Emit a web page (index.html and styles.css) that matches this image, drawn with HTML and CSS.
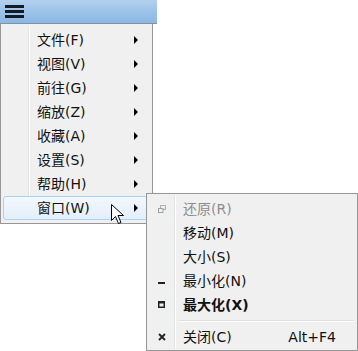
FILE: index.html
```html
<!DOCTYPE html>
<html>
<head>
<meta charset="utf-8">
<link rel="stylesheet" href="styles.css">
</head>
<body>
<div class="app">
  <div class="titlebar">
    <span class="hamburger"><i></i><i></i><i></i></span>
  </div>
  <div class="menu main">
    <div class="item"><span class="label">文件(F)</span><span class="arrow"></span></div>
    <div class="item"><span class="label">视图(V)</span><span class="arrow"></span></div>
    <div class="item"><span class="label">前往(G)</span><span class="arrow"></span></div>
    <div class="item"><span class="label">缩放(Z)</span><span class="arrow"></span></div>
    <div class="item"><span class="label">收藏(A)</span><span class="arrow"></span></div>
    <div class="item"><span class="label">设置(S)</span><span class="arrow"></span></div>
    <div class="item"><span class="label">帮助(H)</span><span class="arrow"></span></div>
    <div class="item hover"><span class="label">窗口(W)</span><span class="arrow"></span></div>
  </div>
  <div class="menu sub">
    <div class="item disabled">
      <span class="icon">
        <svg width="8" height="8" viewBox="0 0 8 8"><rect x="2.5" y="0.5" width="5" height="4" fill="none" stroke="#b0b0b0"/><rect x="0.5" y="3.5" width="4.5" height="4" fill="#f0f0f0" stroke="#a0a0a0"/></svg>
      </span>
      <span class="label">还原(R)</span>
    </div>
    <div class="item"><span class="icon"></span><span class="label">移动(M)</span></div>
    <div class="item"><span class="icon"></span><span class="label">大小(S)</span></div>
    <div class="item">
      <span class="icon"><svg width="8" height="8" viewBox="0 0 8 8"><rect x="0" y="5" width="7" height="2" fill="#222"/></svg></span>
      <span class="label">最小化(N)</span>
    </div>
    <div class="item bold">
      <span class="icon"><svg width="8" height="8" viewBox="0 0 8 8"><path d="M0 0H7V7H0Z M1.5 2.5V5.5H5.5V2.5Z" fill="#222" fill-rule="evenodd"/></svg></span>
      <span class="label">最大化(X)</span>
    </div>
    <div class="sep"></div>
    <div class="item">
      <span class="icon"><svg width="8" height="8" viewBox="0 0 8 8"><path d="M1 1L7 7M7 1L1 7" stroke="#222" stroke-width="1.8"/></svg></span>
      <span class="label">关闭(C)</span>
      <span class="shortcut">Alt+F4</span>
    </div>
  </div>
  <svg class="cursor" width="14" height="22" viewBox="0 0 14 22">
    <path d="M0.5 0.5L0.5 16.5L4.5 12.5L7.5 19.5L10 18.5L7 11.5L12.5 11.5Z" fill="#fff" stroke="#000" stroke-width="1" stroke-linejoin="miter"/>
  </svg>
</div>
</body>
</html>
```
FILE: styles.css
```css
html, body {
  margin: 0;
  padding: 0;
  background: #fff;
}
.app {
  position: relative;
  width: 358px;
  height: 351px;
  overflow: hidden;
  font-family: "DejaVu Sans", "Noto Sans CJK SC", sans-serif;
  font-size: 14px;
  color: #111;
}
.titlebar {
  width: 152px;
  height: 23px;
  background: linear-gradient(to bottom, #b3d1ef 0%, #98c0e8 60%, #8db8e4 100%);
  border-bottom: 1px solid #7d93aa;
  display: flex;
  align-items: center;
  padding-left: 5px;
  box-sizing: content-box;
}
.hamburger {
  display: flex;
  flex-direction: column;
  gap: 2px;
  width: 19px;
}
.hamburger i {
  display: block;
  height: 3px;
  background: #161a24;
}
.menu {
  background: #f0f0f0;
  border: 1px solid #979797;
  box-sizing: border-box;
  position: relative;
}
.menu::before {
  content: "";
  position: absolute;
  top: 2px;
  bottom: 2px;
  left: 27px;
  width: 1px;
  background: #e2e3e3;
  border-right: 1px solid #fff;
}
.main {
  width: 153px;
  border-top: none;
  padding: 4px 2px 3px 2px;
}
.item {
  position: relative;
  height: 24px;
  display: flex;
  align-items: center;
  padding-left: 34px;
  box-sizing: border-box;
  line-height: 1;
}
.label {
  flex: 1;
}
.arrow {
  width: 0;
  height: 0;
  border-top: 4px solid transparent;
  border-bottom: 4px solid transparent;
  border-left: 4px solid #000;
  margin-right: 12px;
}
.hover {
  border: 1px solid #aad0f4;
  border-radius: 3px;
  background: linear-gradient(to bottom, #f3f8fd 0%, #e4eefa 100%);
  padding-left: 33px;
}
.hover .arrow {
  margin-right: 11px;
}
.sub {
  position: absolute;
  left: 146px;
  top: 193px;
  width: 212px;
  height: 158px;
  padding: 3px 2px 2px 2px;
}
.sub .item {
  padding-left: 0;
}
.sub .icon {
  width: 26px;
  display: flex;
  justify-content: center;
  align-items: center;
  height: 100%;
}
.sub .icon svg {
  display: block;
}
.sub .label {
  padding-left: 8px;
}
.disabled .label {
  color: #8d8d8d;
}
.bold .label {
  font-weight: bold;
}
.shortcut {
  margin-right: 19px;
}
.sep {
  height: 8px;
  margin-left: 30px;
  position: relative;
}
.sep::after {
  content: "";
  position: absolute;
  left: 0;
  right: 1px;
  top: 3px;
  height: 1px;
  background: #e0e0e0;
  border-bottom: 1px solid #fff;
}
.cursor {
  position: absolute;
  left: 111px;
  top: 204px;
}
```
